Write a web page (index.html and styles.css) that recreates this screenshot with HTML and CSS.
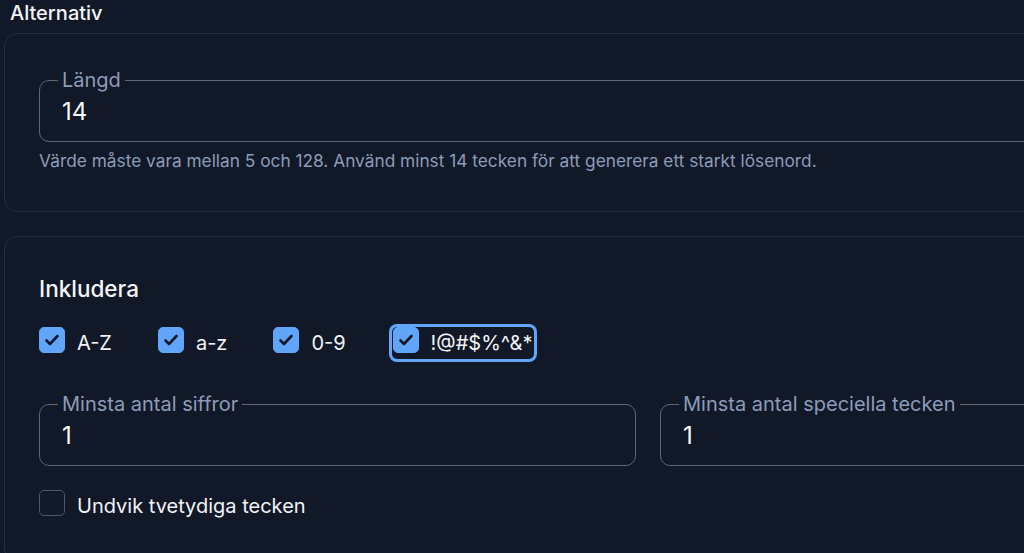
FILE: index.html
```html
<!DOCTYPE html>
<html>
<head>
  <title>Alternativ</title>
  <link rel="stylesheet" href="styles.css">
</head>

<body class="dark">
  <div class="page">
    <h2 class="section-title">Alternativ</h2>

    <div class="card">
      <fieldset class="field">
        <legend>Längd</legend>
        <input type="text" class="field-input" value="14">
      </fieldset>
      <p class="hint">Värde måste vara mellan 5 och 128. Använd minst 14 tecken för att generera ett starkt lösenord.</p>
    </div>

    <div class="card">
      <h3 class="card-title">Inkludera</h3>
      <div class="check-row">
        <label class="check"><span class="box checked"><svg viewBox="0 0 24 24"><path d="M6.5 12.5l3.5 3.5 7.5-8"/></svg></span>A-Z</label>
        <label class="check"><span class="box checked"><svg viewBox="0 0 24 24"><path d="M6.5 12.5l3.5 3.5 7.5-8"/></svg></span>a-z</label>
        <label class="check"><span class="box checked"><svg viewBox="0 0 24 24"><path d="M6.5 12.5l3.5 3.5 7.5-8"/></svg></span>0-9</label>
        <label class="check focused"><span class="box checked"><svg viewBox="0 0 24 24"><path d="M6.5 12.5l3.5 3.5 7.5-8"/></svg></span>!@#$%^&amp;*</label>
      </div>

      <div class="field-grid">
        <fieldset class="field">
          <legend>Minsta antal siffror</legend>
          <input type="text" class="field-input" value="1">
        </fieldset>
        <fieldset class="field">
          <legend>Minsta antal speciella tecken</legend>
          <input type="text" class="field-input" value="1">
        </fieldset>
      </div>

      <label class="check single"><span class="box"></span>Undvik tvetydiga tecken</label>
    </div>
  </div>
</body>

</html>
```

FILE: styles.css
```css
html,
body {
  margin: 0;
  overflow: hidden;
}

body.dark {
  background-color: #111827;
  color: #f3f4f6;
  font-family: Inter, "Noto Sans", sans-serif;
}

.page {
  width: 1288px;
  padding: 0 0 0 4px;
}

.section-title {
  margin: 0 0 7px 6px;
  font-size: 20px;
  line-height: 26px;
  font-weight: 500;
}

.card {
  border: 1px solid #262f3d;
  border-radius: 14px;
  padding: 34px 34px 39px;
  margin-bottom: 24px;
}

.field {
  margin: 0;
  padding: 0 18px 11px;
  border: 1px solid #5f6673;
  border-radius: 10px;
  min-width: 0;
}

.field legend {
  padding: 0 4px;
  font-size: 20px;
  line-height: 24px;
  color: #8d9cb8;
}

.field-input {
  display: block;
  width: 100%;
  box-sizing: border-box;
  height: 38px;
  padding: 0 4px;
  border: none;
  background: transparent;
  color: #f9fafb;
  font-family: inherit;
  font-size: 24px;
  outline: none;
}

.hint {
  margin: 8px 0 0;
  font-size: 17.3px;
  line-height: 22px;
  color: #8d9cb8;
}

.card-title {
  margin: 3px 0 23px;
  font-size: 22.5px;
  line-height: 30px;
  font-weight: 500;
}

.check-row {
  display: flex;
  gap: 46px;
  margin-bottom: 33px;
}

.check {
  display: flex;
  align-items: flex-start;
  gap: 12px;
  font-size: 20px;
  line-height: 32px;
}

.check.focused {
  padding: 0 2px 0 1px;
  border-radius: 5px;
  box-shadow: 0 0 0 3px #60a5fa;
}

.box {
  width: 26px;
  height: 26px;
  box-sizing: border-box;
  border: 1px solid #4b5563;
  border-radius: 5px;
}

.box.checked {
  background-color: #60a5fa;
  border-color: #60a5fa;
}

.box svg {
  display: block;
  width: 100%;
  height: 100%;
  fill: none;
  stroke: #111827;
  stroke-width: 2.6;
  stroke-linecap: round;
  stroke-linejoin: round;
}

.field-grid {
  display: grid;
  grid-template-columns: 1fr 1fr;
  gap: 24px;
  margin-bottom: 24px;
}
```
